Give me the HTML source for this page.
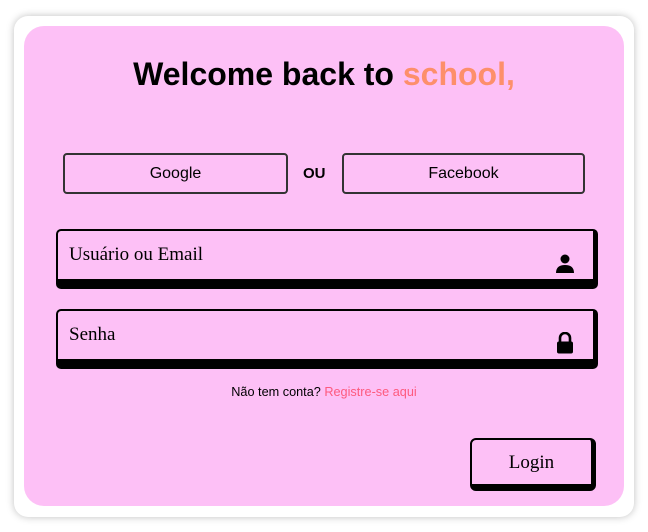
<!DOCTYPE html>
<html><head><style>
body{margin:0;width:648px;height:532px;background:#fff;position:relative;overflow:hidden;font-family:"Liberation Sans",sans-serif}
.outer{position:absolute;left:14px;top:16px;width:620px;height:501px;background:#fff;border-radius:14px;box-shadow:0 0 8px rgba(0,0,0,.25)}
.inner{position:absolute;left:24px;top:26px;width:600px;height:480px;background:#fdc0f6;border-radius:20px}
h1{position:absolute;left:0;top:56px;width:648px;margin:0;text-align:center;font-size:32px;font-weight:bold;color:#000;line-height:36px}
h1 span{color:#fd8f6b}
.btn{position:absolute;top:153px;height:37px;border:2px solid #333;border-radius:4px;box-sizing:content-box;text-align:center;line-height:38px;font-size:16px;color:#000}
.ou{position:absolute;left:303px;top:165px;font-weight:bold;font-size:15px}
.inp{position:absolute;left:56px;width:535px;height:48px;border-style:solid;border-color:#000;border-width:2px 5px 10px 2px;border-radius:5px;font-family:"Liberation Serif",serif;font-size:19px}
.inp .t{position:absolute;left:11px;top:13px}
.inp svg{position:absolute;right:18px;top:22px}
.reg{position:absolute;left:0;width:648px;top:385px;text-align:center;font-size:12.7px;color:#000}
.reg span{color:#fd5a7e}
.login{position:absolute;left:470px;top:438px;width:119px;height:44px;border-style:solid;border-color:#000;border-width:2px 5px 7px 2px;border-radius:6px;font-family:"Liberation Serif",serif;font-size:19px;text-align:center;line-height:46px}
</style></head><body>
<div class="outer"></div><div class="inner"></div>
<h1>Welcome back to <span>school,</span></h1>
<div class="btn" style="left:63px;width:221px">Google</div>
<div class="ou">OU</div>
<div class="btn" style="left:342px;width:239px">Facebook</div>
<div class="inp" style="top:229px"><span class="t">Usuário ou Email</span>
<svg width="20" height="20" viewBox="0 0 20 20"><circle cx="10" cy="6" r="4.5"/><path d="M1 20 Q1 12 10 12 Q19 12 19 20Z"/></svg></div>
<div class="inp" style="top:309px"><span class="t">Senha</span>
<svg width="18" height="22" viewBox="0 0 18 22" style="top:21px;right:19px"><path d="M4 10V6a5 5 0 0 1 10 0v4" fill="none" stroke="#000" stroke-width="2.6"/><rect x="1" y="9.5" width="16" height="12" rx="2"/></svg></div>
<div class="reg">Não tem conta? <span>Registre-se aqui</span></div>
<div class="login">Login</div>
</body></html>
